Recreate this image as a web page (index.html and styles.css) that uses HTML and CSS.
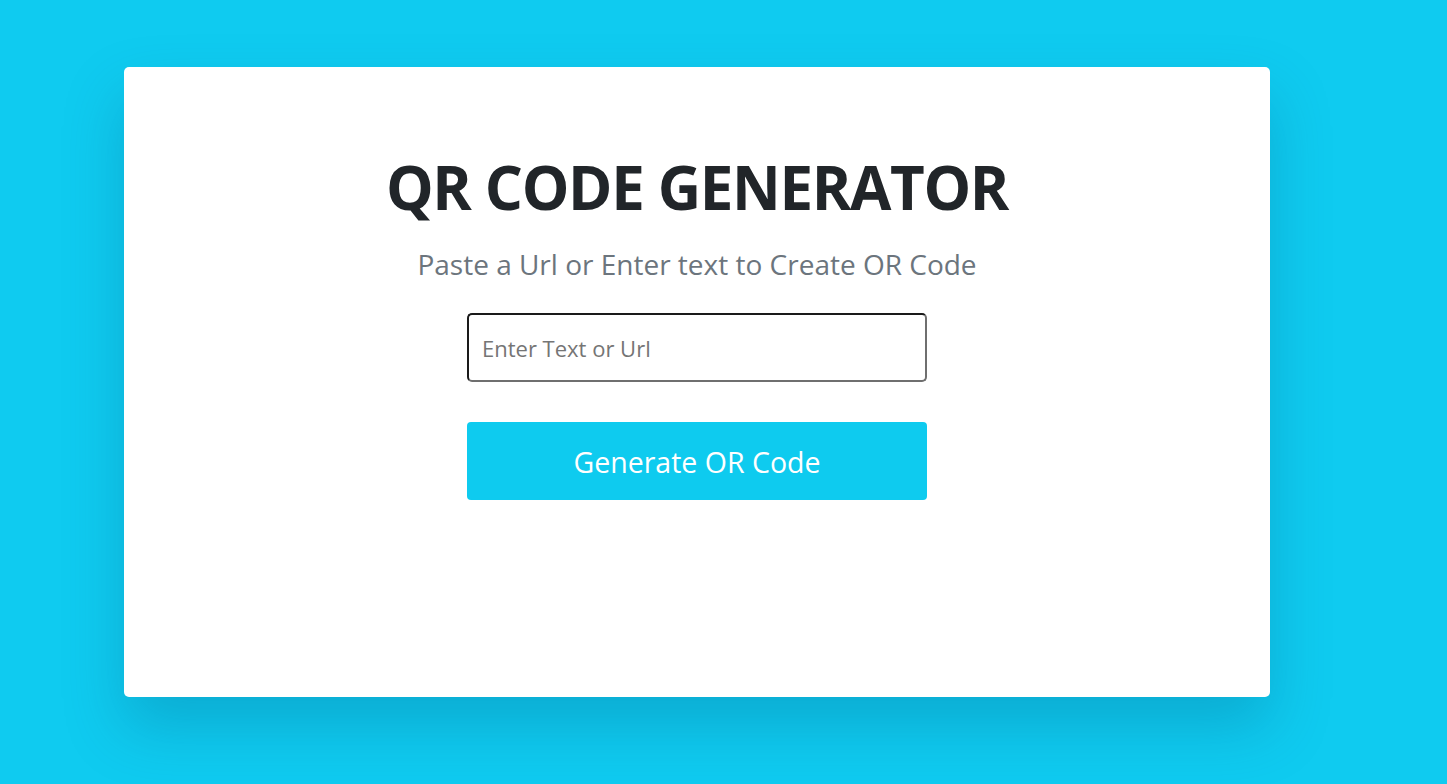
FILE: index.html
```html
<!DOCTYPE html>
<html lang="en">
<head>
<meta charset="utf-8">
<title>QR Code Generator</title>
<link rel="stylesheet" href="styles.css">
</head>
<body>
<main class="card">
  <h1 class="title">QR CODE GENERATOR</h1>
  <p class="subtitle">Paste a Url or Enter text to Create OR Code</p>
  <input class="field" type="text" placeholder="Enter Text or Url">
  <button class="btn" type="button">Generate OR Code</button>
</main>
</body>
</html>
```

FILE: styles.css
```css
* { box-sizing: border-box; }
html, body { margin: 0; height: 100%; }
body {
  background: #0fcbf0;
  font-family: "Open Sans", "Noto Sans", sans-serif;
  padding: 67px 177px 0 124px;
}
.card {
  width: 1146px;
  height: 630px;
  background: #fff;
  border-radius: 5px;
  box-shadow: 0 30px 60px rgba(0, 80, 120, 0.25);
  display: flex;
  flex-direction: column;
  align-items: center;
  padding-top: 82px;
}
.title {
  margin: 0;
  font-size: 60px;
  font-weight: 700;
  color: #212529;
  line-height: 76px;
  letter-spacing: -1.35px;
}
.subtitle {
  margin: 19px 0 0;
  font-size: 28px;
  color: #6c757d;
  line-height: 40px;
}
.field {
  margin-top: 29px;
  width: 460px;
  height: 69px;
  border: 2px solid;
  border-color: #1a1a1a #6f6f6f #6f6f6f #1a1a1a;
  border-radius: 5px;
  padding: 0 13px;
  font-family: inherit;
  font-size: 22px;
  color: #212529;
}
.field::placeholder { color: #757575; }
.btn {
  margin-top: 40px;
  width: 460px;
  height: 78px;
  border: 0;
  border-radius: 4px;
  background: #0ecbef;
  color: #fff;
  font-family: inherit;
  font-size: 28.5px;
  padding-top: 3px;
}
```
